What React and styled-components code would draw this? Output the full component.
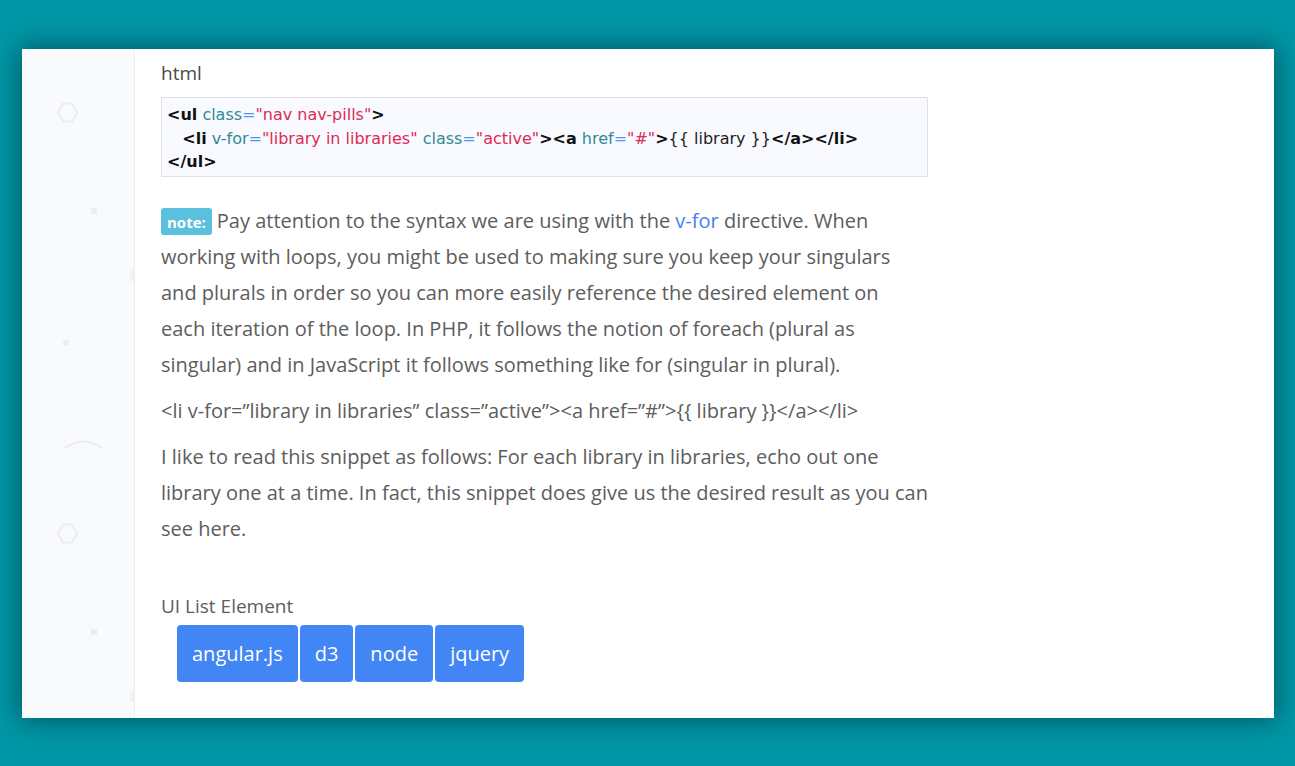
import React from "react";
import styled, { createGlobalStyle } from "styled-components";

const GlobalStyle = createGlobalStyle`
  html, body {
    margin: 0;
    padding: 0;
    height: 100%;
    background: #0097a7;
  }
  #root {
    height: 100%;
  }
`;

const Page = styled.div`
  box-sizing: border-box;
  width: 1295px;
  height: 766px;
  padding: 49px 21px 48px 22px;
  overflow: hidden;
`;

const Card = styled.div`
  display: flex;
  height: 100%;
  background: #fff;
  box-shadow: 0 0 26px 2px rgba(0, 50, 60, 0.65);
  overflow: hidden;
`;

const Sidebar = styled.aside`
  position: relative;
  flex: 0 0 112px;
  background: #f9fafc;
  border-right: 1px solid #eeeff2;
`;

const Shape = styled.svg`
  position: absolute;
  left: ${(p) => p.$x}px;
  top: ${(p) => p.$y}px;
`;

const Content = styled.main`
  box-sizing: border-box;
  width: 795px;
  padding: 11px 0 0 26px;
  font-family: "Open Sans", "Liberation Sans", sans-serif;
  font-size: 20px;
  line-height: 36px;
  color: #5d5d5d;
`;

const Label = styled.div`
  font-size: 19px;
  line-height: 27px;
  color: ${(p) => p.$dark ? "#4a4a4a" : "#5d5d5d"};
`;

const CodeBlock = styled.pre`
  box-sizing: border-box;
  width: 767px;
  height: 80px;
  margin: 10px 0 26px;
  padding: 5px 5px;
  background: #f9faff;
  border: 1px solid #dfe1e6;
  font-family: "DejaVu Sans", Verdana, sans-serif;
  font-size: 16px;
  line-height: 23.5px;
  color: #222;
  white-space: pre;
`;

const Tag = styled.b`
  color: #111;
`;

const Attr = styled.span`
  color: #2f8a96;
`;

const Eq = styled.span`
  color: #4a96f0;
`;

const Str = styled.span`
  color: #dc2b55;
`;

const Para = styled.p`
  margin: 0 0 10px;
`;

const Note = styled.span`
  display: inline-block;
  height: 27px;
  padding: 0 6px;
  margin-right: 5px;
  border-radius: 3px;
  background: #5bc0de;
  color: #fff;
  font-size: 15px;
  font-weight: 700;
  line-height: 28px;
  vertical-align: 0;
`;

const Link = styled.span`
  color: #4a7ff0;
`;

const Section = styled.div`
  margin-top: 46px;
`;

const Pills = styled.ul`
  display: flex;
  gap: 2px;
  margin: 5px 0 0;
  padding: 0 0 0 16px;
  list-style: none;
`;

const Pill = styled.li`
  height: 57px;
  padding: 0 15px;
  border-radius: 4px;
  background: #4285f4;
  color: #fff;
  font-size: 20px;
  line-height: 57px;
`;

const libraries = ["angular.js", "d3", "node", "jquery"];

const hexagon = "M6 1.5 H15 L20 10.5 L15 19.5 H6 L1 10.5 Z";

export default function App() {
  return (
    <>
      <GlobalStyle />
      <Page>
        <Card>
          <Sidebar>
            <Shape $x={35} $y={53} width="21" height="21" viewBox="0 0 21 21">
              <path d={hexagon} fill="none" stroke="#ecedef" strokeWidth="2" />
            </Shape>
            <Shape $x={69} $y={159} width="6" height="6" viewBox="0 0 6 6">
              <rect width="6" height="6" fill="#ecedef" />
            </Shape>
            <Shape $x={108} $y={218} width="4" height="14" viewBox="0 0 4 14">
              <path d="M0 14 L0.5 6 L4 0 V14 Z" fill="#f0f1f3" />
            </Shape>
            <Shape $x={41} $y={291} width="6" height="6" viewBox="0 0 6 6">
              <circle cx="3" cy="3" r="3" fill="#ecedef" />
            </Shape>
            <Shape $x={42} $y={387} width="40" height="14" viewBox="0 0 40 14">
              <path d="M1 12 Q19 -1 38 12" fill="none" stroke="#ecedef" strokeWidth="2" />
            </Shape>
            <Shape $x={35} $y={474} width="21" height="21" viewBox="0 0 21 21">
              <path d={hexagon} fill="none" stroke="#ecedef" strokeWidth="2" />
            </Shape>
            <Shape $x={69} $y={580} width="6" height="6" viewBox="0 0 6 6">
              <rect width="6" height="6" fill="#ecedef" />
            </Shape>
            <Shape $x={108} $y={639} width="4" height="14" viewBox="0 0 4 14">
              <path d="M0 14 L0.5 6 L4 0 V14 Z" fill="#f0f1f3" />
            </Shape>
          </Sidebar>
          <Content>
            <Label $dark>html</Label>
            <CodeBlock>
              <Tag>&lt;ul</Tag> <Attr>class</Attr><Eq>=</Eq><Str>"nav nav-pills"</Str><Tag>&gt;</Tag>
              {"\n   "}
              <Tag>&lt;li</Tag> <Attr>v-for</Attr><Eq>=</Eq><Str>"library in libraries"</Str>{" "}
              <Attr>class</Attr><Eq>=</Eq><Str>"active"</Str><Tag>&gt;&lt;a</Tag>{" "}
              <Attr>href</Attr><Eq>=</Eq><Str>"#"</Str><Tag>&gt;</Tag>{"{{ library }}"}<Tag>&lt;/a&gt;&lt;/li&gt;</Tag>
              {"\n"}
              <Tag>&lt;/ul&gt;</Tag>
            </CodeBlock>
            <Para>
              <Note>note:</Note>Pay attention to the syntax we are using with the <Link>v-for</Link> directive. When
              <br />working with loops, you might be used to making sure you keep your singulars
              <br />and plurals in order so you can more easily reference the desired element on
              <br />each iteration of the loop. In PHP, it follows the notion of foreach (plural as
              <br />singular) and in JavaScript it follows something like for (singular in plural).
            </Para>
            <Para>&lt;li v-for=”library in libraries” class=”active”&gt;&lt;a href=”#”&gt;{"{{ library }}"}&lt;/a&gt;&lt;/li&gt;</Para>
            <Para>
              I like to read this snippet as follows: For each library in libraries, echo out one
              <br />library one at a time. In fact, this snippet does give us the desired result as you can
              <br />see here.
            </Para>
            <Section>
              <Label>UI List Element</Label>
              <Pills>
                {libraries.map((name) => (
                  <Pill key={name}>{name}</Pill>
                ))}
              </Pills>
            </Section>
          </Content>
        </Card>
      </Page>
    </>
  );
}
